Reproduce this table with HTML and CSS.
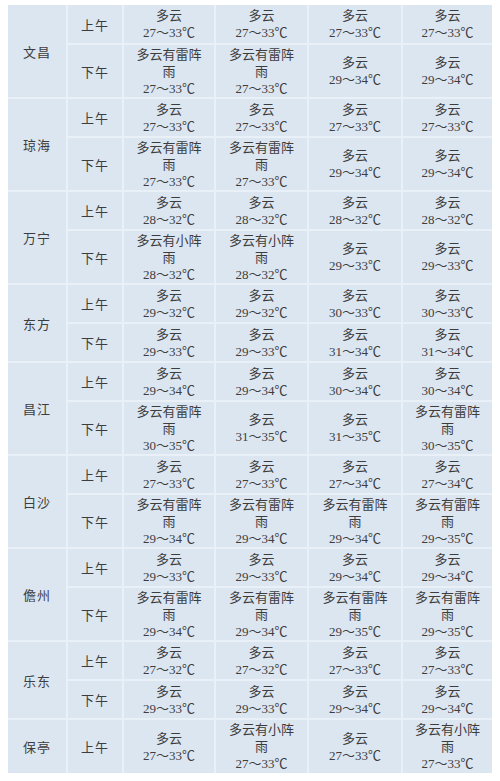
FILE: index.html
```html
<!DOCTYPE html>
<html lang="zh-CN">
<head>
<meta charset="utf-8">
<title>天气预报</title>
<link rel="stylesheet" href="styles.css">
</head>
<body>
<table class="wx">
<colgroup>
<col class="c-city"><col class="c-time"><col class="c-d1"><col class="c-d2"><col class="c-d3"><col class="c-d4">
</colgroup>
<tbody>
<tr class="r2"><td class="city" rowspan="2">文昌</td><td class="time">上午</td>
<td>多云<br>27～33℃</td><td>多云<br>27～33℃</td><td>多云<br>27～33℃</td><td>多云<br>27～33℃</td></tr>
<tr class="r3"><td class="time">下午</td>
<td>多云有雷阵<br>雨<br>27～33℃</td><td>多云有雷阵<br>雨<br>27～33℃</td><td>多云<br>29～34℃</td><td>多云<br>29～34℃</td></tr>

<tr class="r2"><td class="city" rowspan="2">琼海</td><td class="time">上午</td>
<td>多云<br>27～33℃</td><td>多云<br>27～33℃</td><td>多云<br>27～33℃</td><td>多云<br>27～33℃</td></tr>
<tr class="r3"><td class="time">下午</td>
<td>多云有雷阵<br>雨<br>27～33℃</td><td>多云有雷阵<br>雨<br>27～33℃</td><td>多云<br>29～34℃</td><td>多云<br>29～34℃</td></tr>

<tr class="r2"><td class="city" rowspan="2">万宁</td><td class="time">上午</td>
<td>多云<br>28～32℃</td><td>多云<br>28～32℃</td><td>多云<br>28～32℃</td><td>多云<br>28～32℃</td></tr>
<tr class="r3"><td class="time">下午</td>
<td>多云有小阵<br>雨<br>28～32℃</td><td>多云有小阵<br>雨<br>28～32℃</td><td>多云<br>29～33℃</td><td>多云<br>29～33℃</td></tr>

<tr class="r2"><td class="city" rowspan="2">东方</td><td class="time">上午</td>
<td>多云<br>29～32℃</td><td>多云<br>29～32℃</td><td>多云<br>30～33℃</td><td>多云<br>30～33℃</td></tr>
<tr class="r2"><td class="time">下午</td>
<td>多云<br>29～33℃</td><td>多云<br>29～33℃</td><td>多云<br>31～34℃</td><td>多云<br>31～34℃</td></tr>

<tr class="r2"><td class="city" rowspan="2">昌江</td><td class="time">上午</td>
<td>多云<br>29～34℃</td><td>多云<br>29～34℃</td><td>多云<br>30～34℃</td><td>多云<br>30～34℃</td></tr>
<tr class="r3"><td class="time">下午</td>
<td>多云有雷阵<br>雨<br>30～35℃</td><td>多云<br>31～35℃</td><td>多云<br>31～35℃</td><td>多云有雷阵<br>雨<br>30～35℃</td></tr>

<tr class="r2"><td class="city" rowspan="2">白沙</td><td class="time">上午</td>
<td>多云<br>27～33℃</td><td>多云<br>27～33℃</td><td>多云<br>27～34℃</td><td>多云<br>27～34℃</td></tr>
<tr class="r3"><td class="time">下午</td>
<td>多云有雷阵<br>雨<br>29～34℃</td><td>多云有雷阵<br>雨<br>29～34℃</td><td>多云有雷阵<br>雨<br>29～34℃</td><td>多云有雷阵<br>雨<br>29～35℃</td></tr>

<tr class="r2"><td class="city" rowspan="2">儋州</td><td class="time">上午</td>
<td>多云<br>29～33℃</td><td>多云<br>29～33℃</td><td>多云<br>29～34℃</td><td>多云<br>29～34℃</td></tr>
<tr class="r3"><td class="time">下午</td>
<td>多云有雷阵<br>雨<br>29～34℃</td><td>多云有雷阵<br>雨<br>29～34℃</td><td>多云有雷阵<br>雨<br>29～35℃</td><td>多云有雷阵<br>雨<br>29～35℃</td></tr>

<tr class="r2"><td class="city" rowspan="2">乐东</td><td class="time">上午</td>
<td>多云<br>27～32℃</td><td>多云<br>27～32℃</td><td>多云<br>27～33℃</td><td>多云<br>27～33℃</td></tr>
<tr class="r2"><td class="time">下午</td>
<td>多云<br>29～33℃</td><td>多云<br>29～33℃</td><td>多云<br>29～34℃</td><td>多云<br>29～34℃</td></tr>

<tr class="r3"><td class="city">保亭</td><td class="time">上午</td>
<td>多云<br>27～33℃</td><td>多云有小阵<br>雨<br>27～33℃</td><td>多云<br>27～33℃</td><td>多云有小阵<br>雨<br>27～33℃</td></tr>
</tbody>
</table>
</body>
</html>
```

FILE: styles.css
```css
html, body {
  background: #ffffff;
}
body {
  margin: 5px 8px;
}
.wx {
  width: 484px;
  table-layout: fixed;
  border-collapse: collapse;
  border-style: hidden;
  background: #dce6f1;
  color: #3d3d3d;
  font-family: "Liberation Serif", "Noto Sans CJK SC", serif;
  font-size: 13px;
  line-height: 17px;
}
.c-city { width: 59px; }
.c-time { width: 56px; }
.c-d1 { width: 92px; }
.c-d2 { width: 93px; }
.c-d3 { width: 94px; }
.c-d4 { width: 90px; }
.wx td {
  border: 2px solid #eaf0f7;
  padding: 0;
  text-align: center;
  vertical-align: middle;
  white-space: nowrap;
}
.r2 { height: 39px; }
.r3 { height: 54px; }
.wx td.city,
.wx td.time {
  font-family: "Noto Sans CJK SC", sans-serif;
  letter-spacing: 1px;
}
```
